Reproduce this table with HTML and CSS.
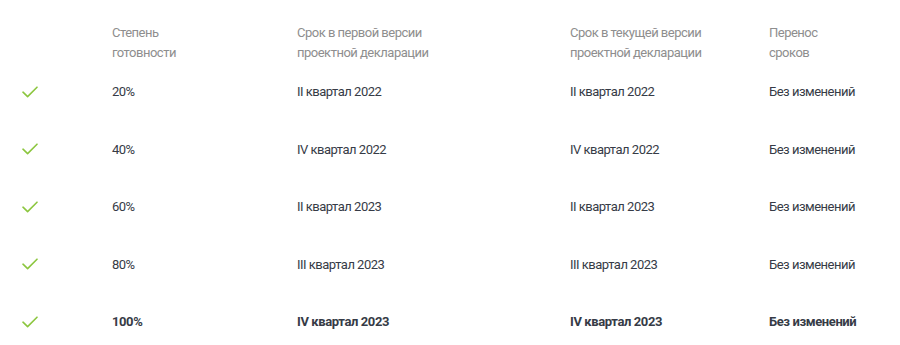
FILE: index.html
```html
<!DOCTYPE html>
<html lang="ru">
<head>
<meta charset="utf-8">
<link rel="stylesheet" href="styles.css">
</head>
<body>
<div class="table">
  <div class="row head">
    <div class="cell icon"></div>
    <div class="cell">Степень<br>готовности</div>
    <div class="cell">Срок в первой версии<br>проектной декларации</div>
    <div class="cell">Срок в текущей версии<br>проектной декларации</div>
    <div class="cell">Перенос<br>сроков</div>
  </div>
  <div class="row">
    <div class="cell icon"><svg class="check" viewBox="0 0 16 12"><path d="M1 6.2 L5.6 10.6 L15 1.2"/></svg></div>
    <div class="cell">20%</div>
    <div class="cell">II квартал 2022</div>
    <div class="cell">II квартал 2022</div>
    <div class="cell">Без изменений</div>
  </div>
  <div class="row">
    <div class="cell icon"><svg class="check" viewBox="0 0 16 12"><path d="M1 6.2 L5.6 10.6 L15 1.2"/></svg></div>
    <div class="cell">40%</div>
    <div class="cell">IV квартал 2022</div>
    <div class="cell">IV квартал 2022</div>
    <div class="cell">Без изменений</div>
  </div>
  <div class="row">
    <div class="cell icon"><svg class="check" viewBox="0 0 16 12"><path d="M1 6.2 L5.6 10.6 L15 1.2"/></svg></div>
    <div class="cell">60%</div>
    <div class="cell">II квартал 2023</div>
    <div class="cell">II квартал 2023</div>
    <div class="cell">Без изменений</div>
  </div>
  <div class="row">
    <div class="cell icon"><svg class="check" viewBox="0 0 16 12"><path d="M1 6.2 L5.6 10.6 L15 1.2"/></svg></div>
    <div class="cell">80%</div>
    <div class="cell">III квартал 2023</div>
    <div class="cell">III квартал 2023</div>
    <div class="cell">Без изменений</div>
  </div>
  <div class="row last">
    <div class="cell icon"><svg class="check" viewBox="0 0 16 12"><path d="M1 6.2 L5.6 10.6 L15 1.2"/></svg></div>
    <div class="cell">100%</div>
    <div class="cell">IV квартал 2023</div>
    <div class="cell">IV квартал 2023</div>
    <div class="cell">Без изменений</div>
  </div>
</div>
</body>
</html>
```
FILE: styles.css
```css
html, body {
  margin: 0;
  padding: 0;
  background: #ffffff;
}
body {
  font-family: Roboto, "Liberation Sans", sans-serif;
  font-size: 13px;
  letter-spacing: -0.5px;
  color: #363b46;
}
.table {
  padding-top: 23px;
}
.row {
  display: grid;
  grid-template-columns: 112px 185px 273px 199px 1fr;
  align-items: center;
  height: 57.5px;
}
.row.head {
  height: auto;
  align-items: start;
  line-height: 20px;
  color: #8e8e8e;
}
.row.last {
  font-weight: 700;
  letter-spacing: -0.4px;
}
.icon {
  padding-left: 22px;
  display: flex;
  align-items: center;
}
.check {
  width: 16px;
  height: 12px;
  fill: none;
  stroke: #8cc63f;
  stroke-width: 1.6;
  stroke-linecap: round;
  stroke-linejoin: round;
}
```
